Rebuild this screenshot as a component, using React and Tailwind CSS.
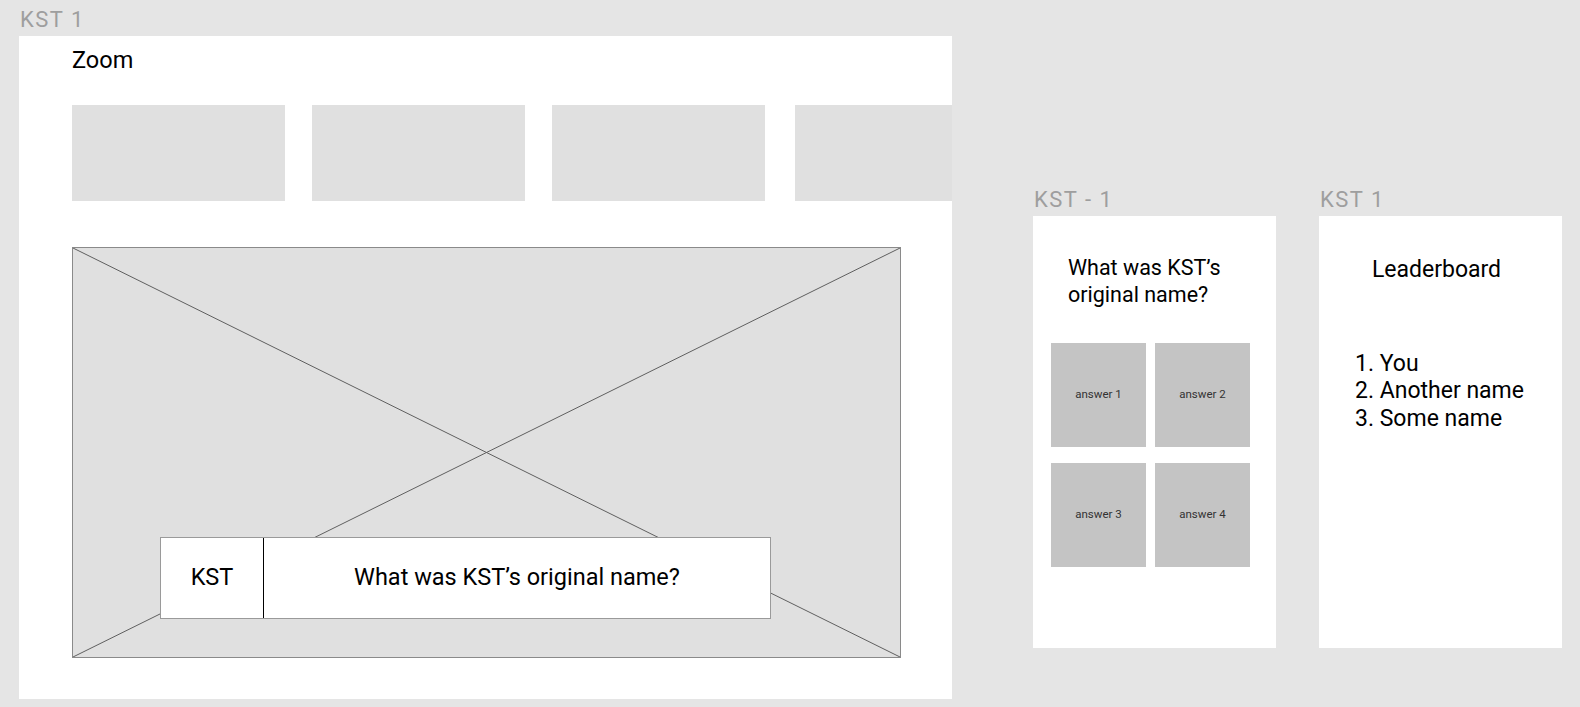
import React from "react";

const thumbs = [
  { w: "w-[213px]", gap: "" },
  { w: "w-[213px]", gap: "ml-[27px]" },
  { w: "w-[213px]", gap: "ml-[27px]" },
  { w: "w-[213px]", gap: "ml-[30px]" },
];

const answers = ["answer 1", "answer 2", "answer 3", "answer 4"];
const leaders = ["1. You", "2. Another name", "3. Some name"];

const FrameLabel = ({ children }) => (
  <div className="text-[22px] leading-[27px] tracking-[1.5px] text-[#9e9e9e] mb-[3px] pl-px whitespace-nowrap">
    {children}
  </div>
);

const App = () => {
  return (
    <div
      className="w-[1580px] h-[707px] bg-[#e5e5e5] overflow-hidden flex text-black"
      style={{ fontFamily: "Roboto, 'Noto Sans', sans-serif" }}
    >
      {/* main frame */}
      <div className="ml-[19px] pt-[6px] flex flex-col">
        <FrameLabel>KST 1</FrameLabel>
        <div className="w-[933px] h-[663px] bg-white overflow-hidden pl-[53px] pt-[11px]">
          <div className="text-[23.5px] leading-[27px]">Zoom</div>
          <div className="flex mt-[31px]">
            {thumbs.map((t, i) => (
              <div key={i} className={`${t.w} ${t.gap} h-[96px] bg-[#e0e0e0] shrink-0`} />
            ))}
          </div>
          <div className="relative w-[829px] h-[411px] mt-[46px] bg-[#e0e0e0] border border-[#8a8a8a]">
            <svg
              className="absolute inset-0 w-full h-full"
              viewBox="0 0 829 410"
              preserveAspectRatio="none"
            >
              <line x1="0" y1="0" x2="829" y2="410" stroke="#5e5e5e" strokeWidth="1" />
              <line x1="829" y1="0" x2="0" y2="410" stroke="#5e5e5e" strokeWidth="1" />
            </svg>
            <div className="absolute left-[87px] top-[289px] w-[611px] h-[82px] bg-white border border-[#9a9a9a] flex">
              <div className="w-[103px] border-r border-black flex items-center justify-center text-[23.5px]">
                KST
              </div>
              <div className="flex-1 flex items-center justify-center text-[23.5px]">
                What was KST’s original name?
              </div>
            </div>
          </div>
        </div>
      </div>

      {/* question frame */}
      <div className="ml-[81px] pt-[186px] flex flex-col">
        <FrameLabel>KST - 1</FrameLabel>
        <div className="w-[243px] h-[432px] bg-white pt-[38px]">
          <div className="pl-[35px] text-[21.5px] leading-[27px]">
            What was KST’s
            <br />
            original name?
          </div>
          <div className="grid grid-cols-[95px_95px] gap-x-[9px] gap-y-[16px] pl-[18px] mt-[35px]">
            {answers.map((a) => (
              <div
                key={a}
                className="h-[104px] bg-[#c4c4c4] flex items-center justify-center text-[11.5px] text-[#333]"
              >
                {a}
              </div>
            ))}
          </div>
        </div>
      </div>

      {/* leaderboard frame */}
      <div className="ml-[43px] pt-[186px] flex flex-col">
        <FrameLabel>KST 1</FrameLabel>
        <div className="w-[243px] h-[432px] bg-white pt-[40px]">
          <div className="text-center pr-[8px] text-[23px] leading-[27px]">Leaderboard</div>
          <div className="pl-[36px] mt-[67px] text-[23px] leading-[27.3px]">
            {leaders.map((l) => (
              <div key={l}>{l}</div>
            ))}
          </div>
        </div>
      </div>
    </div>
  );
};

export default App;
